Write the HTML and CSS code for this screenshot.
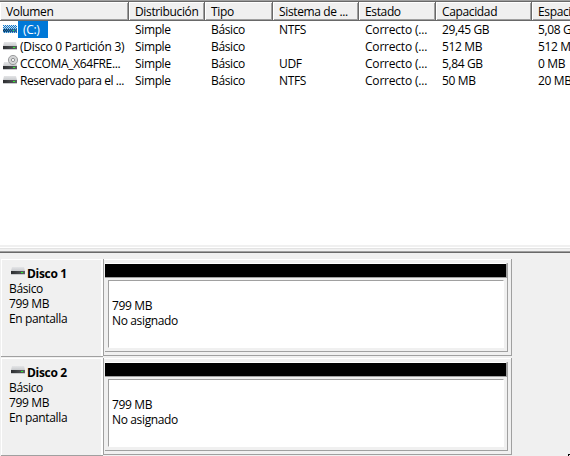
FILE: index.html
```html
<!DOCTYPE html>
<html lang="es">
<head>
<meta charset="utf-8">
<title>Administración de discos</title>
<link rel="stylesheet" href="styles.css">
</head>
<body>
<svg class="defs" width="0" height="0">
  <defs>
    <linearGradient id="lid" x1="0" y1="0" x2="0" y2="1"><stop offset="0" stop-color="#e4e5e7"/><stop offset="1" stop-color="#c8cacd"/></linearGradient>
    <linearGradient id="front" x1="0" y1="0" x2="1" y2="0"><stop offset="0" stop-color="#2c2e30"/><stop offset="1" stop-color="#5c5f62"/></linearGradient>
    <pattern id="dither" width="2" height="2" patternUnits="userSpaceOnUse"><path d="M0 0h1v1H0zM1 1h1v1H1z" fill="#0078d7"/></pattern>
    <symbol id="drive" viewBox="0 0 14 8"><path d="M1 0h12l1 4H0z" fill="url(#lid)"/><path d="M0 4h14v3H0z" fill="url(#front)"/><path d="M0 7h14v1H0z" fill="#c9cbcd"/><path d="M10 5h2v1h-2z" fill="#2df52d"/></symbol>
  </defs>
</svg>
<main class="window">
  <section class="volumes">
    <div class="row head">
      <div>Volumen</div><div>Distribución</div><div>Tipo</div><div>Sistema de ...</div><div>Estado</div><div>Capacidad</div><div>Espacio</div>
    </div>
    <div class="row">
      <div class="name"><svg class="icon" width="15" height="16"><use href="#drive" x="0" y="4" width="14" height="8"/><path d="M0 4h14v8H0z" fill="url(#dither)" shape-rendering="crispEdges"/></svg><span class="selected">(C:)</span></div><div>Simple</div><div>Básico</div><div>NTFS</div><div class="state">Correcto (...</div><div>29,45 GB</div><div>5,08 GB</div>
    </div>
    <div class="row">
      <div class="name"><svg class="icon" width="15" height="16"><use href="#drive" x="0" y="4" width="14" height="8"/></svg><span class="partition">(Disco 0 Partición 3)</span></div><div>Simple</div><div>Básico</div><div></div><div class="state">Correcto (...</div><div>512 MB</div><div>512 MB</div>
    </div>
    <div class="row">
      <div class="name"><svg class="icon" width="15" height="16"><use href="#drive" x="0" y="7" width="14" height="8"/><circle cx="10" cy="5" r="4.6" fill="#d4d5d6" stroke="#88898b" stroke-width=".8"/><circle cx="10" cy="5" r="1.6" fill="#fff" stroke="#77797b" stroke-width=".8"/></svg><span class="media">CCCOMA_X64FRE...</span></div><div>Simple</div><div>Básico</div><div>UDF</div><div class="state">Correcto (...</div><div>5,84 GB</div><div>0 MB</div>
    </div>
    <div class="row">
      <div class="name"><svg class="icon" width="15" height="16"><use href="#drive" x="0" y="4" width="14" height="8"/></svg><span class="reserved">Reservado para el ...</span></div><div>Simple</div><div>Básico</div><div>NTFS</div><div class="state">Correcto (...</div><div>50 MB</div><div>20 MB</div>
    </div>
  </section>
  <div class="splitter"></div>
  <section class="disks">
    <article class="disk">
      <div class="label"><h2><svg width="14" height="8"><use href="#drive" width="14" height="8"/></svg>Disco 1</h2><p>Básico</p><p>799 MB</p><p>En pantalla</p></div>
      <div class="track"><div class="region"><div class="bar"></div><div class="space"><p>799 MB</p><p>No asignado</p></div></div></div>
    </article>
    <article class="disk">
      <div class="label"><h2><svg width="14" height="8"><use href="#drive" width="14" height="8"/></svg>Disco 2</h2><p>Básico</p><p>799 MB</p><p>En pantalla</p></div>
      <div class="track"><div class="region"><div class="bar"></div><div class="space"><p>799 MB</p><p>No asignado</p></div></div></div>
    </article>
  </section>
  <i class="pointer"></i>
</main>
</body>
</html>
```
FILE: styles.css
```css
* { box-sizing: border-box; margin: 0; padding: 0; }
body { width: 570px; height: 456px; overflow: hidden; background: #f0f0f0; color: #000; font: 12px/15px "Open Sans", "Noto Sans", sans-serif; letter-spacing: -.36px; }
.defs { display: block; height: 0; }
.window { position: relative; height: 456px; overflow: hidden; }
.volumes { height: 245px; background: #fff; border-top: 1px solid #a0a0a0; overflow: hidden; }
.row { display: grid; grid-template-columns: 129px 76px 68px 86px 77px 96px 80px; height: 17px; line-height: 17px; white-space: nowrap; }
.row > div { padding-left: 6px; overflow: hidden; }
.head { height: 20px; border-top: 1px solid #696969; border-bottom: 1px solid #696969; background: #f0f0f0; line-height: 20px; }
.head > div { border-right: 1px solid #696969; box-shadow: inset 1px 1px #fff, inset -1px 0 #a0a0a0, inset 0 -1px #a0a0a0; }
.row > .name { display: flex; padding-left: 3px; }
.name span { margin-left: 2px; }
.icon { flex: none; display: block; }
.name .selected { width: 30px; height: 17px; margin-left: 0; padding-left: 5px; background: #0078d7; color: #fff; }
.partition { letter-spacing: -.27px; }
.reserved { letter-spacing: -.42px; }
.row > .state { letter-spacing: -.2px; }
.splitter { height: 14px; border-top: 2px solid #f0f0f0; background: linear-gradient(#fff 0 1px, #e3e3e3 1px 2px, #f0f0f0 2px 4px, #a0a0a0 4px 5px, #696969 5px 6px, #f0f0f0 6px); }
.disk { display: grid; grid-template-columns: 103px 409px; width: 512px; height: 99px; }
.label { height: 98px; padding: 6px 0 0 8px; margin-left: 1px; border-top: 1px solid #fff; border-bottom: 1px solid #a0a0a0; box-shadow: inset 1px 0 #fff, inset -2px 0 #fff; }
.label h2 { display: flex; gap: 2px; padding-left: 2px; font-size: 12px; line-height: 15px; letter-spacing: -.32px; }
.label svg { margin-top: 1px; }
.track { height: 97px; padding: 4px 3px 3px 1px; border: solid #a0a0a0; border-width: 0 1px 1px; box-shadow: inset 0 1px #fff; }
.region { height: 89px; border: solid #a0a0a0; border-width: 0 1px 1px 0; }
.bar { height: 15px; border-top: 1px solid #fff; border-right: 1px solid #a0a0a0; border-bottom: 1px solid #a0a0a0; background: #000; }
.space { height: 68px; margin: 2px 3px 0; padding: 17px 0 0 3px; border: 1px solid #a0a0a0; border-right-color: #fff; border-bottom-color: #fff; background: #fff; }
.pointer { position: absolute; right: 0; bottom: 0; width: 2px; height: 2px; background: linear-gradient(135deg, #000 60%, #f0f0f0 60%); }
```
